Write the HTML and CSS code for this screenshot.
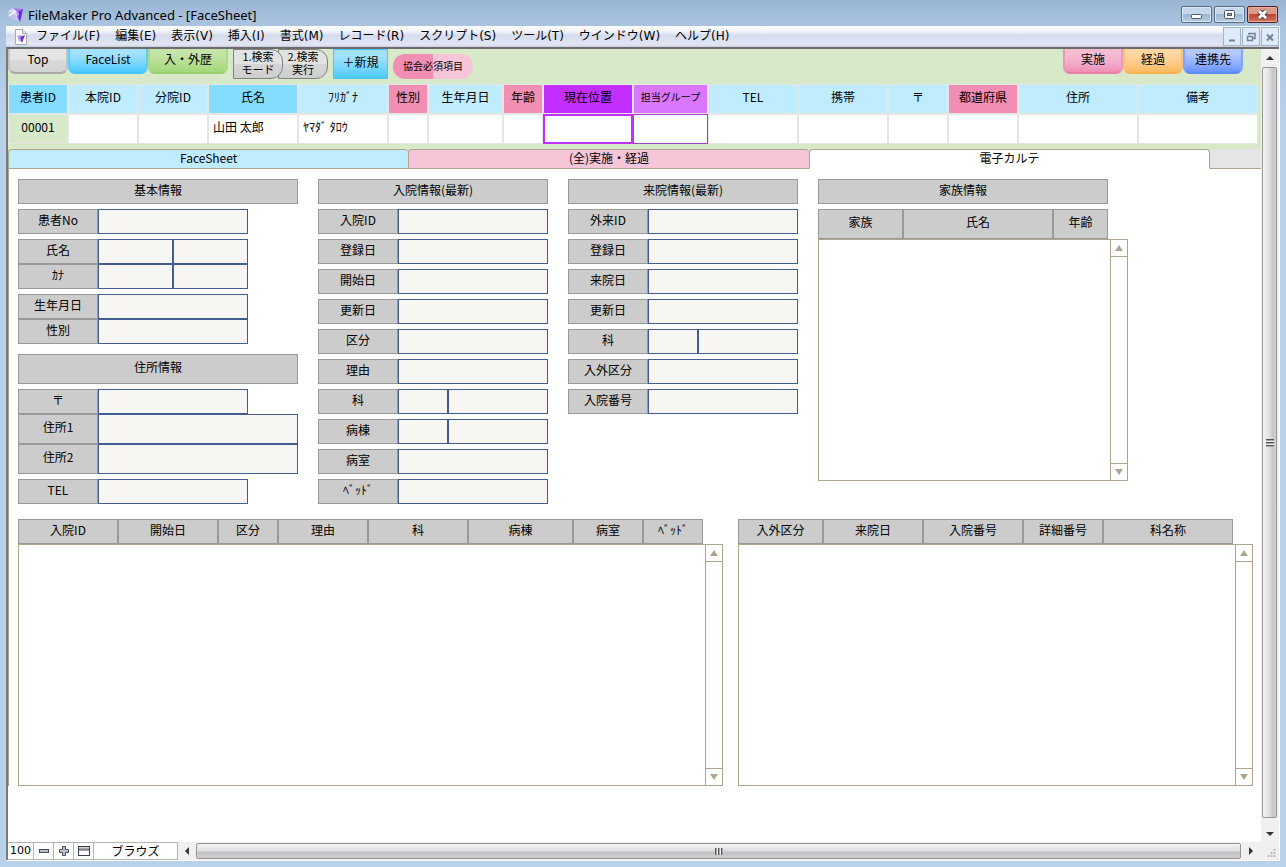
FILE: index.html
```html
<!DOCTYPE html>
<html lang="ja">
<head>
<meta charset="utf-8">
<title>FileMaker Pro Advanced - [FaceSheet]</title>
<link rel="stylesheet" href="styles.css">
</head>
<body>
<div class="window">
  <header class="titlebar">
    <svg class="app-icon" viewBox="0 0 16 16" aria-hidden="true"><path d="M0 4 6 1l4 2 2 9-5 1-6-4z" fill="#dcdcf4"/><path d="M0 4l6 2 4 6-3 1-6-4z" fill="#bfc4ec"/><path d="M1 9l8-6" stroke="#fff" stroke-width="1.500"/><path d="M5 1l10 1-4 4-3-2z" fill="#a07ce8"/><path d="M15 2l-3 13-3-6 1-4z" fill="#7526dc"/><path d="M8 4l3 2-1 6z" fill="#b59af0"/></svg>
    <h1 class="title">FileMaker Pro Advanced - [FaceSheet]</h1>
    <div class="window-buttons">
      <button class="win-btn" aria-label="最小化"><svg viewBox="0 0 29 15"><rect x="9.500" y="7.500" width="10" height="4" rx="1" fill="#fff" stroke="#4d5663"/></svg></button>
      <button class="win-btn" aria-label="元に戻す"><svg viewBox="0 0 29 15"><rect x="9.500" y="3.500" width="10" height="8" rx="1" fill="#fff" stroke="#4d5663"/><rect x="12.500" y="6.500" width="4" height="2" fill="#8fb0d2" stroke="#4d5663"/></svg></button>
      <button class="win-btn win-close" aria-label="閉じる"><svg viewBox="0 0 29 15"><path d="M11 4l7 7M18 4l-7 7" stroke="#5a3a3a" stroke-width="5"/><path d="M11 4l7 7M18 4l-7 7" stroke="#fff" stroke-width="3"/></svg></button>
    </div>
  </header>

  <div class="client">
    <nav class="menubar">
      <svg class="doc-icon" viewBox="0 0 14 16" aria-hidden="true"><path d="M1.500.5h7l4 4v11h-11z" fill="#fbfbfd" stroke="#a5a8b2"/><path d="M8.500.5v4h4" fill="#e3e5ee" stroke="#a5a8b2"/><path d="M3 7l3-1 4 1-2 6-3-1z" fill="#b9a5e8"/><path d="M6 8l5-2-3 8z" fill="#7a2fd8"/></svg>
      <button>ファイル(F)</button><button>編集(E)</button><button>表示(V)</button><button>挿入(I)</button><button>書式(M)</button><button>レコード(R)</button><button>スクリプト(S)</button><button>ツール(T)</button><button>ウインドウ(W)</button><button>ヘルプ(H)</button>
      <div class="mdi-buttons">
        <button class="mdi" aria-label="文書を最小化"><svg viewBox="0 0 16 18"><path d="M5 12.500h6" stroke="#71859b" stroke-width="2"/></svg></button>
        <button class="mdi" aria-label="文書を元に戻す"><svg viewBox="0 0 16 18"><path d="M6 7V5.500h6v5h-2" fill="none" stroke="#71859b" stroke-width="1.500"/><path d="M4.500 8.500h5v4h-5z" fill="none" stroke="#71859b" stroke-width="1.500"/></svg></button>
        <button class="mdi" aria-label="文書を閉じる"><svg viewBox="0 0 16 18"><path d="M5 6.500l6 6M11 6.500l-6 6" stroke="#71859b" stroke-width="2"/></svg></button>
      </div>
    </nav>

    <div class="document">
      <div class="viewport">
        <main class="layout">
          <section class="head">
            <div class="toolbar">
              <button class="tab-btn grey">Top</button>
              <button class="tab-btn cyan wide">FaceList</button>
              <button class="tab-btn green wide">入・外歴</button>
              <div class="search-pair">
                <button class="search first">1.検索<br>モード</button><button class="search second">2.検索<br>実行</button>
              </div>
              <button class="new-btn">＋新規</button>
              <span class="badge">協会必須項目</span>
              <div class="right-btns">
                <button class="tab-btn pink">実施</button><button class="tab-btn orange">経過</button><button class="tab-btn blue">連携先</button>
              </div>
            </div>
            <table class="patient">
              <colgroup><col class="w60"><col class="w70"><col class="w70"><col class="w90"><col class="w90"><col class="w40"><col class="w75"><col class="w40"><col class="w90"><col class="w75"><col class="w90"><col class="w90"><col class="w60"><col class="w70"><col class="w120"><col class="w120"></colgroup>
              <thead><tr><th class="key">患者ID</th><th>本院ID</th><th>分院ID</th><th class="key">氏名</th><th>ﾌﾘｶﾞﾅ</th><th class="req">性別</th><th>生年月日</th><th class="req">年齢</th><th class="place">現在位置</th><th class="group">担当グループ</th><th>TEL</th><th>携帯</th><th>〒</th><th class="req">都道府県</th><th>住所</th><th>備考</th></tr></thead>
              <tbody><tr><td class="id">00001</td><td></td><td></td><td>山田 太郎</td><td>ﾔﾏﾀﾞ ﾀﾛｳ</td><td></td><td></td><td></td><td class="place-cell"></td><td class="group-cell"></td><td></td><td></td><td></td><td></td><td></td><td></td></tr></tbody>
            </table>
          </section>

          <div class="tabs" role="tablist">
            <button class="tab tab-face" role="tab">FaceSheet</button>
            <button class="tab tab-all" role="tab">(全)実施・経過</button>
            <button class="tab tab-chart" role="tab" aria-selected="true">電子カルテ</button>
            <span class="tab-rest"></span>
          </div>

          <div class="panel">
            <div class="forms">
              <section class="form">
                <h2>基本情報</h2>
                <div class="row"><label for="no">患者No</label><input id="no" class="f150"></div>
                <div class="stack">
                  <div class="row"><label for="sei">氏名</label><input id="sei" class="f75"><input class="f75" aria-label="名"></div>
                  <div class="row"><label for="kana">ｶﾅ</label><input id="kana" class="f75"><input class="f75" aria-label="名ｶﾅ"></div>
                </div>
                <div class="stack">
                  <div class="row"><label for="birth">生年月日</label><input id="birth" class="f150"></div>
                  <div class="row"><label for="sex">性別</label><input id="sex" class="f150"></div>
                </div>
                <h2 class="address">住所情報</h2>
                <div class="stack">
                  <div class="row"><label for="zip">〒</label><input id="zip" class="f150"></div>
                  <div class="row tall"><label for="ad1">住所1</label><input id="ad1" class="fill"></div>
                  <div class="row tall"><label for="ad2">住所2</label><input id="ad2" class="fill"></div>
                </div>
                <div class="row"><label for="tel">TEL</label><input id="tel" class="f150"></div>
              </section>

              <section class="form">
                <h2>入院情報(最新)</h2>
                <div class="row"><label for="n1">入院ID</label><input id="n1" class="fill"></div>
                <div class="row"><label for="n2">登録日</label><input id="n2" class="fill"></div>
                <div class="row"><label for="n3">開始日</label><input id="n3" class="fill"></div>
                <div class="row"><label for="n4">更新日</label><input id="n4" class="fill"></div>
                <div class="row"><label for="n5">区分</label><input id="n5" class="fill"></div>
                <div class="row"><label for="n6">理由</label><input id="n6" class="fill"></div>
                <div class="row"><label for="n7">科</label><input id="n7" class="f50"><input class="fill" aria-label="科名"></div>
                <div class="row"><label for="n8">病棟</label><input id="n8" class="f50"><input class="fill" aria-label="病棟名"></div>
                <div class="row"><label for="n9">病室</label><input id="n9" class="fill"></div>
                <div class="row"><label for="n10">ﾍﾞｯﾄﾞ</label><input id="n10" class="fill"></div>
              </section>

              <section class="form">
                <h2>来院情報(最新)</h2>
                <div class="row"><label for="r1">外来ID</label><input id="r1" class="fill"></div>
                <div class="row"><label for="r2">登録日</label><input id="r2" class="fill"></div>
                <div class="row"><label for="r3">来院日</label><input id="r3" class="fill"></div>
                <div class="row"><label for="r4">更新日</label><input id="r4" class="fill"></div>
                <div class="row"><label for="r5">科</label><input id="r5" class="f50"><input class="fill" aria-label="科名"></div>
                <div class="row"><label for="r6">入外区分</label><input id="r6" class="fill"></div>
                <div class="row"><label for="r7">入院番号</label><input id="r7" class="fill"></div>
              </section>

              <section class="form family">
                <h2>家族情報</h2>
                <div class="portal">
                  <table class="list tall-head"><colgroup><col class="w85"><col class="w150"><col class="w55"></colgroup><thead><tr><th>家族</th><th>氏名</th><th>年齢</th></tr></thead></table>
                  <div class="list-box"><div class="list-body"></div><div class="list-scroll"><button aria-label="上へ"><svg viewBox="0 0 8 6"><path d="M4 0l4 6H0z"/></svg></button><button aria-label="下へ"><svg viewBox="0 0 8 6"><path d="M0 0h8L4 6z"/></svg></button></div></div>
                </div>
              </section>
            </div>

            <div class="histories">
              <section class="portal">
                <table class="list"><colgroup><col class="w100"><col class="w100"><col class="w60"><col class="w90"><col class="w100"><col class="w105"><col class="w70"><col class="w60"></colgroup><thead><tr><th>入院ID</th><th>開始日</th><th>区分</th><th>理由</th><th>科</th><th>病棟</th><th>病室</th><th>ﾍﾞｯﾄﾞ</th></tr></thead></table>
                <div class="list-box"><div class="list-body"></div><div class="list-scroll"><button aria-label="上へ"><svg viewBox="0 0 8 6"><path d="M4 0l4 6H0z"/></svg></button><button aria-label="下へ"><svg viewBox="0 0 8 6"><path d="M0 0h8L4 6z"/></svg></button></div></div>
              </section>
              <section class="portal">
                <table class="list"><colgroup><col class="w85"><col class="w100"><col class="w100"><col class="w80"><col class="w130"></colgroup><thead><tr><th>入外区分</th><th>来院日</th><th>入院番号</th><th>詳細番号</th><th>科名称</th></tr></thead></table>
                <div class="list-box"><div class="list-body"></div><div class="list-scroll"><button aria-label="上へ"><svg viewBox="0 0 8 6"><path d="M4 0l4 6H0z"/></svg></button><button aria-label="下へ"><svg viewBox="0 0 8 6"><path d="M0 0h8L4 6z"/></svg></button></div></div>
              </section>
            </div>
          </div>
        </main>
        <div class="vscroll">
          <button class="v-arrow" aria-label="上にスクロール"><svg width="8" height="4" viewBox="0 0 8 4"><path d="M4 0l4 4H0z" fill="#333"/></svg></button>
          <div class="v-thumb"><span class="v-grip"></span></div>
          <button class="v-arrow v-down" aria-label="下にスクロール"><svg width="8" height="4" viewBox="0 0 8 4"><path d="M0 0h8L4 4z" fill="#333"/></svg></button>
        </div>
      </div>

      <footer class="status">
        <button class="zoom-value">100</button>
        <button class="icon-btn" aria-label="縮小"><svg viewBox="0 0 12 12"><rect x="1.500" y="4.500" width="9" height="3" fill="#b9bdc8" stroke="#4a4e5a"/></svg></button>
        <button class="icon-btn" aria-label="拡大"><svg viewBox="0 0 12 12"><path d="M4.500 1.500h3v3h3v3h-3v3h-3v-3h-3v-3h3z" fill="#b9bdc8" stroke="#4a4e5a"/></svg></button>
        <button class="icon-btn" aria-label="ステータスツールバー"><svg viewBox="0 0 12 12"><rect x=".5" y="1.500" width="11" height="9" fill="#fff" stroke="#3c3f48"/><path d="M1 3.500h10" stroke="#a4a7b0" stroke-width="2"/><path d="M1 5h10" stroke="#3c3f48"/></svg></button>
        <button class="mode">ブラウズ</button>
        <div class="hscroll">
          <button class="h-arrow" aria-label="左にスクロール"><svg width="4" height="8" viewBox="0 0 4 8"><path d="M4 0v8L0 4z" fill="#333"/></svg></button>
          <div class="h-thumb"><span class="h-grip"></span></div>
          <button class="h-arrow h-right" aria-label="右にスクロール"><svg width="4" height="8" viewBox="0 0 4 8"><path d="M0 0v8l4-4z" fill="#333"/></svg></button>
        </div>
        <svg class="resize" viewBox="0 0 17 17" aria-hidden="true"><path d="M12 7h2v2h-2zM12 10h2v2h-2zM9 10h2v2H9zM12 13h2v2h-2zM9 13h2v2H9zM6 13h2v2H6z" fill="#bbb"/></svg>
      </footer>
    </div>
  </div>
</div>
</body>
</html>
```
FILE: styles.css
```css
* { box-sizing: border-box; }

body {
  margin: 0;
  font: 12px/14px "Noto Sans CJK JP", sans-serif;
  color: #000;
}

button {
  margin: 0;
  padding: 0;
  border: 0;
  background: none;
  font: inherit;
  color: inherit;
}

button svg { display: block; margin: 0 auto; }

/* Window frame */
.window {
  display: flex;
  flex-direction: column;
  height: 100vh;
  padding: 0 6px 6px;
  background: linear-gradient(#9ab5d4 0, #aac4e0 26px, #bad1ea 120px);
}

.titlebar {
  display: flex;
  align-items: center;
  height: 26px;
  padding: 3px 2px 0 0;
}

.app-icon { width: 16px; height: 16px; margin: 0 4px 0 2px; }

.title {
  flex: 1;
  margin: 0;
  font: 13px/16px "Noto Sans", sans-serif;
}

.window-buttons { display: flex; gap: 2px; }

.win-btn {
  width: 31px;
  height: 17px;
  border: 1px solid #56697f;
  border-radius: 2px;
  background: linear-gradient(#c5d7ea 0 50%, #9bb7d3 50%, #b6cde4);
  box-shadow: inset 0 0 0 1px #dce8f4;
}

.win-close {
  border-color: #55201d;
  background: linear-gradient(#dc9a8c 0 50%, #bc4630 50%, #cf7660);
  box-shadow: inset 0 0 0 1px #e5aca0;
}

.client {
  display: flex;
  flex: 1;
  flex-direction: column;
  min-height: 0;
  border-right: 1px solid #fff;
  border-bottom: 1px solid #fff;
}

.menubar {
  display: flex;
  align-items: center;
  gap: 15px;
  height: 21px;
  padding-left: 8px;
  background: linear-gradient(#fff 0, #f2f4fa 25%, #d5dcee 45%, #e2e6f4 90%, #c3c9dc);
  font: 12px/18px "DejaVu Sans", "Noto Sans CJK JP", sans-serif;
  white-space: nowrap;
}

.menubar > button { padding-bottom: 1px; }

.doc-icon { width: 14px; height: 16px; margin-right: -7px; }

.mdi-buttons { display: flex; gap: 1px; margin-left: auto; }

.mdi {
  width: 18px;
  height: 19px;
  border: 1px solid #a0b5cb;
  background: #dfebf9;
}

/* Document area */
.document {
  display: flex;
  flex: 1;
  flex-direction: column;
  min-height: 0;
  border-top: 2px solid #6c6c6c;
  border-left: 2px solid #7a7a7a;
  background: #fff;
}

.viewport { display: flex; flex: 1; min-height: 0; }

.layout { flex: 1; min-width: 0; overflow: hidden; }

.head {
  height: 100px;
  padding-right: 3px;
  background: #d8e9c9;
}

.toolbar {
  display: flex;
  align-items: flex-start;
  height: 35px;
}

.tab-btn {
  width: 60px;
  height: 25px;
  padding-bottom: 3px;
  border: 2px solid;
  border-top: 0;
  border-radius: 0 0 7px 7px;
}

.wide { width: 80px; }
.grey { border-color: #ccc #c4c4c4 #a9a9a9; background: linear-gradient(#e4e4e4 0 50%, #dadada 50%, #d2d2d2); }
.cyan { border-color: #73d3ff #60ccfa #46c4fa; background: linear-gradient(#a3e2ff 0 20%, #7bd7ff 60%, #4bcaff); }
.green { border-color: #b5dd94 #acd98a #9bd070; background: linear-gradient(#c5e4a9 0 20%, #b5de92 60%, #a3d778); }
.pink { border-color: #f2a5c2 #ee98b9 #e881aa; background: linear-gradient(#f5bdd1 0 20%, #f3accb 60%, #ef8fb3); }
.orange { border-color: #ffc985 #ffc077 #ffb052; background: linear-gradient(#ffd7a2 0 20%, #ffcb8a 60%, #ffba61); }
.blue { border-color: #90b0ff #81a4ff #5d8bff; background: linear-gradient(#b3c8ff 0 20%, #94b1ff 60%, #6793ff); }

.search-pair { display: flex; margin-left: 5px; }

.search {
  width: 50px;
  height: 30px;
  padding-bottom: 2px;
  border: 1px solid #808080;
  border-radius: 0 12px 12px 0;
  background: linear-gradient(#e2e2e2 0 50%, #d6d6d6 50%, #cecece);
  font-size: 11px;
  line-height: 13px;
}

.first { z-index: 1; }
.second { margin-left: -5px; }

.new-btn {
  width: 55px;
  height: 30px;
  margin-left: 5px;
  padding-bottom: 5px;
  border: 1px solid #4cc6f9;
  background: linear-gradient(#a3e2ff 0 20%, #7bd7ff 60%, #4bcaff);
}

.badge {
  width: 80px;
  margin: 5px 0 0 5px;
  padding-bottom: 1px;
  border-radius: 12px;
  background: linear-gradient(90deg, #f08fb3 50%, #f6c5d8 50%);
  font-size: 10px;
  line-height: 24px;
  text-align: center;
}

.right-btns { display: flex; margin: 0 15px 0 auto; }

table { border-collapse: separate; border-spacing: 0; table-layout: fixed; }
th, td { padding: 0; font-weight: 400; white-space: nowrap; }

.w40 { width: 40px; }
.w55 { width: 55px; }
.w60 { width: 60px; }
.w70 { width: 70px; }
.w75 { width: 75px; }
.w80 { width: 80px; }
.w85 { width: 85px; }
.w90 { width: 90px; }
.w100 { width: 100px; }
.w105 { width: 105px; }
.w120 { width: 120px; }
.w130 { width: 130px; }
.w150 { width: 150px; }

.patient { width: 100%; }

.patient th,
.patient td {
  height: 30px;
  padding-bottom: 5px;
  border: 1px solid #e5e5e5;
}

.patient th { background: #bfecff; }
.patient td { padding-left: 4px; background: #fff; }
.patient .key { background: #84dcff; }
.patient .req { background: #f08fb3; }
.patient .place { background: #c32fff; }
.patient .group { background: #db76ff; font-size: 10px; }
.patient .id { padding-left: 0; background: #d8e9c9; text-align: center; }
.patient .place-cell { border: 2px solid #c32fff; }
.patient .group-cell { border-color: #a53fd0; }

/* Tabs */
.tabs {
  display: flex;
  height: 20px;
  background: #d8e9c9;
}

.tab {
  flex: 400;
  padding-bottom: 2px;
  border: 1px solid #afa48e;
  border-right: 0;
  border-radius: 4px 4px 0 0;
}

.tab-face { background: #bfecff; }
.tab-all { background: #f6c5d8; }
.tab-chart { border-right: 1px solid #afa48e; border-bottom-color: #fff; background: #fff; }
.tab-rest { flex: 51; border-bottom: 1px solid #afa48e; background: #e5e5e5; }

.panel {
  padding: 10px 8px 0 9px;
  border-left: 1px solid #afa48e;
}

.forms {
  display: grid;
  grid-template-columns: minmax(0, 280fr) minmax(0, 230fr) minmax(0, 230fr) minmax(0, 310fr) minmax(0, 105fr);
  column-gap: 20px;
}

.form { display: flex; flex-direction: column; gap: 5px; }

h2,
label,
.list th {
  border: 1px solid #999;
  background: #ccc;
  font-size: 12px;
  font-weight: 400;
  line-height: 14px;
  text-align: center;
}

h2 { height: 25px; margin: 0; padding-top: 3px; }
.address { height: 30px; margin-top: 5px; padding-top: 5px; }

.row { display: flex; height: 25px; }
.tall { height: 30px; }
.row label { width: 80px; padding-top: 3px; }
.row.tall label { padding-top: 5px; }

input {
  min-width: 0;
  padding: 0 4px;
  border: 1px solid #405f90;
  border-radius: 0;
  background: #f7f6f2;
  font: inherit;
}

.f50 { width: 50px; }
.f75 { width: 75px; }
.f150 { width: 150px; }
.fill { flex: 1; }

.family h2 { margin-right: 20px; }

/* Portals: header table above a scrolling list */
.portal { display: flex; flex-direction: column; }
.portal .list { margin-right: 20px; }
.list th { height: 25px; padding-bottom: 3px; }
.tall-head th { height: 30px; padding-bottom: 4px; }

.list-box {
  display: flex;
  height: 242px;
  border: 1px solid #afa48e;
}

.list-body { flex: 1; }

.list-scroll {
  display: flex;
  flex-direction: column;
  justify-content: space-between;
  width: 17px;
  border-left: 1px solid #afa48e;
}

.list-scroll button { height: 17px; border: 0 solid #afa48e; }
.list-scroll button:first-child { border-bottom-width: 1px; }
.list-scroll button:last-child { border-top-width: 1px; }
.list-scroll svg { width: 8px; height: 6px; fill: #afa48e; }

.histories {
  display: grid;
  grid-template-columns: 705fr 515fr;
  gap: 15px;
  margin-top: 15px;
}

/* Scroll bars and status bar */
.vscroll {
  display: flex;
  flex-direction: column;
  width: 18px;
  padding: 0 2px 0 1px;
  background: #f0f0f0;
}

.v-arrow { height: 18px; }
.v-down { height: 24px; padding-top: 8px; }

.v-thumb {
  display: flex;
  flex: 1;
  align-items: center;
  justify-content: center;
  border: 1px solid #959595;
  border-radius: 2px;
  background: linear-gradient(90deg, #f4f4f4, #e2e2e2 45%, #c6c6ca 80%, #d4d4d4);
}

.v-grip {
  width: 8px;
  height: 8px;
  background: repeating-linear-gradient(#555 0 1px, #aaa 1px 2px, #eee 2px 3px);
}

.status {
  display: flex;
  height: 18px;
  background: #f0f0f0;
}

.status > button {
  border: 1px solid #b4b4b4;
  border-left: 0;
  background: #fff;
}

.status .zoom-value { width: 26px; font-family: "DejaVu Sans", sans-serif; font-size: 11px; }
.icon-btn { width: 20px; }
.icon-btn svg { width: 12px; height: 12px; }
.mode { width: 84px; }

.hscroll { display: flex; flex: 1; padding: 1px 0; }
.h-arrow { width: 18px; }
.h-right { width: 20px; }

.h-thumb {
  display: flex;
  flex: 1;
  align-items: center;
  justify-content: center;
  border: 1px solid #959595;
  border-radius: 2px;
  background: linear-gradient(#f4f4f4, #e2e2e2 45%, #c2c2c6 60%, #d2d2d4);
}

.h-grip {
  width: 8px;
  height: 7px;
  background: repeating-linear-gradient(90deg, #555 0 1px, #aaa 1px 2px, #eee 2px 3px);
}

.resize { width: 18px; height: 17px; }
```
